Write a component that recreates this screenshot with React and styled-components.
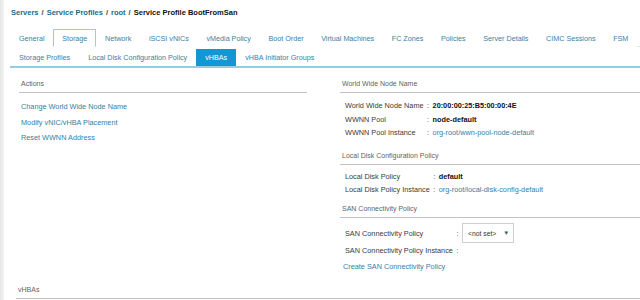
import React from "react";
import styled, { createGlobalStyle } from "styled-components";

const Global = createGlobalStyle`
  html, body { margin: 0; padding: 0; background: #fff; }
  body { font-family: "Liberation Sans", Arial, sans-serif; font-size: 7.3px; color: #333; }
  * { box-sizing: border-box; }
`;

const Page = styled.div`
  display: flex;
  width: 640px;
  height: 300px;
  overflow: hidden;
`;

const Strip = styled.div`
  width: 4px;
  flex: none;
  background: linear-gradient(to right, #e6e6e6, #f4f4f4);
`;

const Main = styled.div`
  flex: 1;
  min-width: 0;
  padding-left: 6px;
  display: flex;
  flex-direction: column;
`;

const Crumbs = styled.div`
  margin: 8px 0 0 1px;
  height: 10px;
  line-height: 10px;
  font-size: 7.5px;
  font-weight: bold;
  color: #111;
  white-space: nowrap;
`;

const CrumbLink = styled.span`
  color: #24698a;
`;

const Sep = styled.span`
  color: #444;
  margin: 0 3px;
`;

const TabBar = styled.div`
  display: flex;
  margin-top: 11px;
  border-bottom: 1px solid #e2e2e2;
  white-space: nowrap;
`;

const Tab = styled.div`
  padding: 0 7.6px 0 8px;
  height: 18px;
  line-height: 17px;
  margin-bottom: -1px;
  font-size: 7.2px;
  border: 1px solid ${(p) => (p.$active ? "#9ccbdf" : "transparent")};
  border-bottom: 1px solid ${(p) => (p.$active ? "#fff" : "transparent")};
  background: #fff;
  color: #3a7fa2;
`;

const SubBar = styled.div`
  display: flex;
  margin-top: 2px;
  border-bottom: 2px solid #92cde4;
  white-space: nowrap;
`;

const SubTab = styled.div`
  padding: 0 9px;
  height: 17px;
  line-height: 17px;
  font-size: 7.2px;
  background: ${(p) => (p.$active ? "#1496d2" : "transparent")};
  color: ${(p) => (p.$active ? "#fff" : "#3a7fa2")};
`;

const Columns = styled.div`
  display: flex;
  gap: 33px;
  padding: 11px 0 0 9px;
`;

const LeftCol = styled.div`
  width: 288px;
  flex: none;
  display: flex;
  flex-direction: column;
`;

const RightCol = styled.div`
  flex: 1;
  display: flex;
  flex-direction: column;
`;

const Header = styled.div`
  font-size: 7px;
  line-height: 10px;
  color: #5f5f5f;
  padding: 0 2px 3px;
  border-bottom: 1px solid #c2c2c2;
  margin-top: ${(p) => p.$mt || 0}px;
`;

const LinkList = styled.div`
  display: flex;
  flex-direction: column;
  gap: 5.7px;
  padding: 9px 0 0 2px;
`;

const Link = styled.div`
  color: #3381a6;
  line-height: 10px;
  white-space: nowrap;
`;

const Props = styled.div`
  display: grid;
  grid-template-columns: auto auto 1fr;
  column-gap: 3.5px;
  align-items: center;
  padding: ${(p) => p.$pt || 4}px 0 0 5px;
  white-space: nowrap;
`;

const Cell = styled.div`
  height: ${(p) => p.$h || 13.5}px;
  line-height: ${(p) => p.$h || 13.5}px;
  color: ${(p) => (p.$link ? "#3381a6" : p.$bold ? "#111" : "#3a3a3a")};
  font-weight: ${(p) => (p.$bold ? "bold" : "normal")};
  display: flex;
  align-items: center;
`;

const Select = styled.div`
  width: 52px;
  height: 20px;
  border: 1px solid #cfcfcf;
  background: #fff;
  display: flex;
  align-items: center;
  padding-left: 5px;
  gap: 7px;
  font-size: 6.8px;
  color: #333;
`;

const Arrow = styled.span`
  font-size: 6px;
  color: #2b5d80;
`;

const CreateLink = styled(Link)`
  margin: 4px 0 0 3px;
`;

const Bottom = styled.div`
  margin-top: 13px;
  padding-left: 6px;
`;

const mainTabs = [
  "General",
  "Storage",
  "Network",
  "iSCSI vNICs",
  "vMedia Policy",
  "Boot Order",
  "Virtual Machines",
  "FC Zones",
  "Policies",
  "Server Details",
  "CIMC Sessions",
  "FSM",
];

const subTabs = [
  "Storage Profiles",
  "Local Disk Configuration Policy",
  "vHBAs",
  "vHBA Initiator Groups",
];

export default function App() {
  return (
    <>
      <Global />
      <Page>
        <Strip />
        <Main>
          <Crumbs>
            <CrumbLink>Servers</CrumbLink>
            <Sep>/</Sep>
            <CrumbLink>Service Profiles</CrumbLink>
            <Sep>/</Sep>
            <CrumbLink>root</CrumbLink>
            <Sep>/</Sep>
            Service Profile BootFromSan
          </Crumbs>
          <TabBar>
            {mainTabs.map((t) => (
              <Tab key={t} $active={t === "Storage"}>
                {t}
              </Tab>
            ))}
          </TabBar>
          <SubBar>
            {subTabs.map((t) => (
              <SubTab key={t} $active={t === "vHBAs"}>
                {t}
              </SubTab>
            ))}
          </SubBar>
          <Columns>
            <LeftCol>
              <Header>Actions</Header>
              <LinkList>
                <Link>Change World Wide Node Name</Link>
                <Link>Modify vNIC/vHBA Placement</Link>
                <Link>Reset WWNN Address</Link>
              </LinkList>
            </LeftCol>
            <RightCol>
              <Header>World Wide Node Name</Header>
              <Props $pt={6}>
                <Cell>World Wide Node Name</Cell>
                <Cell>:</Cell>
                <Cell $bold>20:00:00:25:B5:00:00:4E</Cell>
                <Cell>WWNN Pool</Cell>
                <Cell>:</Cell>
                <Cell $bold>node-default</Cell>
                <Cell>WWNN Pool Instance</Cell>
                <Cell>:</Cell>
                <Cell $link>org-root/wwn-pool-node-default</Cell>
              </Props>
              <Header $mt={11}>Local Disk Configuration Policy</Header>
              <Props $pt={5}>
                <Cell>Local Disk Policy</Cell>
                <Cell>:</Cell>
                <Cell $bold>default</Cell>
                <Cell>Local Disk Policy Instance</Cell>
                <Cell>:</Cell>
                <Cell $link>org-root/local-disk-config-default</Cell>
              </Props>
              <Header $mt={7}>SAN Connectivity Policy</Header>
              <Props $pt={5}>
                <Cell $h={21}>SAN Connectivity Policy</Cell>
                <Cell $h={21}>:</Cell>
                <Cell $h={21}>
                  <Select>
                    &lt;not set&gt;
                    <Arrow>▼</Arrow>
                  </Select>
                </Cell>
                <Cell $h={14}>SAN Connectivity Policy Instance</Cell>
                <Cell $h={14}>:</Cell>
                <Cell $h={14}></Cell>
              </Props>
              <CreateLink>Create SAN Connectivity Policy</CreateLink>
            </RightCol>
          </Columns>
          <Bottom>
            <Header>vHBAs</Header>
          </Bottom>
        </Main>
      </Page>
    </>
  );
}
